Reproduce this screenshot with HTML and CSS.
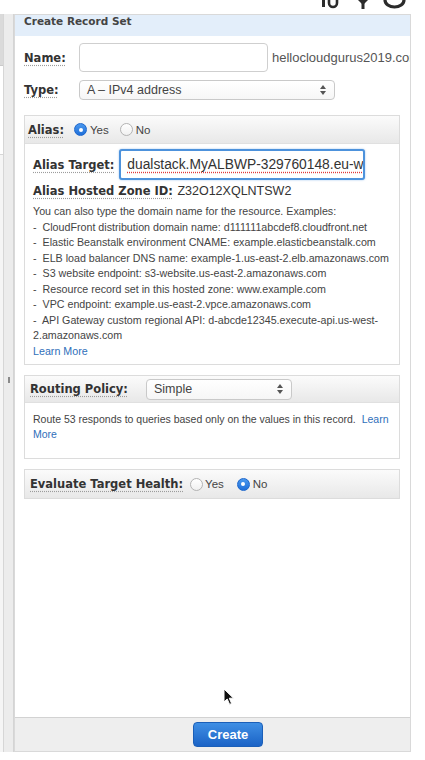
FILE: index.html
```html
<!DOCTYPE html>
<html>
<head>
<meta charset="utf-8">
<title>Create Record Set</title>
<link rel="stylesheet" href="styles.css">
</head>
<body>
<div class="screen">
  <div class="topbar">
    <svg class="top-icons" width="95" height="14" viewBox="0 0 95 14">
      <rect x="6" y="0" width="3" height="7" fill="#2b2b2b"/>
      <path d="M13 0 v3 a4 4 0 0 0 8 0 v-3" fill="none" stroke="#2b2b2b" stroke-width="2.6"/>
      <path d="M42 0 h10 l-5 5 z" fill="#2b2b2b"/>
      <rect x="45.5" y="0" width="3" height="9" fill="#2b2b2b"/>
      <path d="M69 0 a9.5 7 0 0 0 19 0" fill="none" stroke="#2b2b2b" stroke-width="3.2"/>
    </svg>
  </div>
  <div class="main">
    <div class="side">
      <div class="side-tabs">
        <div class="tab-dark"></div>
        <div class="tab-white"></div>
        <div class="tab-rest"></div>
      </div>
      <div class="side-rail"><span class="grip"></span></div>
    </div>
    <div class="panel">
      <div class="panel-head">Create Record Set</div>
      <div class="panel-body">
        <div class="row row-name">
          <span class="lbl lbl-col">Name:</span>
          <div class="textbox"></div>
          <span class="suffix">hellocloudgurus2019.com</span>
        </div>
        <div class="row row-type">
          <span class="lbl lbl-col">Type:</span>
          <div class="select select-type">
            <span class="select-text">A – IPv4 address</span>
            <svg class="arrows" width="6" height="10" viewBox="0 0 6 10"><path d="M3 0 L6 4 H0 Z M3 10 L0 6 H6 Z" fill="#555"/></svg>
          </div>
        </div>

        <div class="box box-alias">
          <div class="box-head head-alias">
            <span class="lbl">Alias:</span>
            <span class="radio on r-alias-yes"></span><span class="opt">Yes</span>
            <span class="radio r-alias-no"></span><span class="opt">No</span>
          </div>
          <div class="box-body body-alias">
            <div class="row row-target">
              <span class="lbl lbl-target">Alias Target:</span>
              <div class="textbox focus"><span class="spell">dualstack.MyALBWP-329760148.eu-west-1.elb.amazonaws.com</span></div>
            </div>
            <div class="zone"><span class="lbl">Alias Hosted Zone ID:</span> <span class="zone-val">Z32O12XQLNTSW2</span></div>
            <div class="help">
              <div>You can also type the domain name for the resource. Examples:</div>
              <div>-&nbsp; CloudFront distribution domain name: d111111abcdef8.cloudfront.net</div>
              <div>-&nbsp; Elastic Beanstalk environment CNAME: example.elasticbeanstalk.com</div>
              <div>-&nbsp; ELB load balancer DNS name: example-1.us-east-2.elb.amazonaws.com</div>
              <div>-&nbsp; S3 website endpoint: s3-website.us-east-2.amazonaws.com</div>
              <div>-&nbsp; Resource record set in this hosted zone: www.example.com</div>
              <div>-&nbsp; VPC endpoint: example.us-east-2.vpce.amazonaws.com</div>
              <div>-&nbsp; API Gateway custom regional API: d-abcde12345.execute-api.us-west-<br>2.amazonaws.com</div>
              <div><a class="link" href="#">Learn More</a></div>
            </div>
          </div>
        </div>

        <div class="box box-routing">
          <div class="box-head head-routing">
            <span class="lbl lbl-routing">Routing Policy:</span>
            <div class="select select-routing">
              <span class="select-text">Simple</span>
              <svg class="arrows" width="6" height="10" viewBox="0 0 6 10"><path d="M3 0 L6 4 H0 Z M3 10 L0 6 H6 Z" fill="#555"/></svg>
            </div>
          </div>
          <div class="box-body body-routing">
            Route 53 responds to queries based only on the values in this record.&nbsp; <a class="link" href="#">Learn<br>More</a>
          </div>
        </div>

        <div class="box box-eval">
          <div class="box-head head-eval">
            <span class="lbl">Evaluate Target Health:</span>
            <span class="radio r-eval-yes"></span><span class="opt">Yes</span>
            <span class="radio on r-eval-no"></span><span class="opt">No</span>
          </div>
        </div>
      </div>
      <div class="panel-foot">
        <button class="btn" type="button">Create</button>
      </div>
    </div>
  </div>
  <svg class="cursor" width="12" height="18" viewBox="0 0 12 18">
    <path d="M1 1 L1 14 L4.2 11 L6.6 16.4 L8.6 15.5 L6.3 10.2 L10.5 10.2 Z" fill="#111" stroke="#fff" stroke-width="1" stroke-linejoin="round"/>
  </svg>
</div>
</body>
</html>
```

FILE: styles.css
```css
* { box-sizing: border-box; }
html, body { margin: 0; padding: 0; background: #fff; }
body { font-family: "Liberation Sans", Arial, Helvetica, sans-serif; color: #444; }

.screen { position: relative; width: 425px; height: 760px; overflow: hidden; background: #fff; }

.topbar { height: 14px; display: flex; justify-content: flex-end; padding-right: 14px; }
.top-icons { display: block; }

.main { display: flex; height: 738px; }

.side { width: 14px; display: flex; flex-shrink: 0; }
.side-tabs { width: 4px; display: flex; flex-direction: column; border-right: 1px solid #d6d6d6; }
.tab-dark { height: 52px; background: #dadada; border-bottom: 1px solid #cacaca; }
.tab-white { height: 89px; background: #fff; border-bottom: 1px solid #d6d6d6; }
.tab-rest { flex: 1; background: #f5f5f5; }
.side-rail { flex: 1; background: #ececec; border-right: 1px solid #d4d4d4; display: flex; align-items: center; justify-content: center; padding-bottom: 6px; }
.grip { width: 2px; height: 6px; background: #8a8a8a; }

.panel { width: 397px; flex-shrink: 0; display: flex; flex-direction: column; border: 1px solid #d9d9d9; overflow: hidden; background: #fff; }
.panel-head { height: 21px; line-height: 21px; padding-left: 9px; background: #e3eefa; font: bold 10.5px "DejaVu Sans", Verdana, sans-serif; color: #444; }
.panel-body { flex: 1; padding: 7px 10px 0 9px; display: flex; flex-direction: column; }

.lbl { font: bold 11.5px "DejaVu Sans", Verdana, sans-serif; color: #333; text-decoration: underline dotted #9c9c9c; text-underline-offset: 3px; white-space: nowrap; }
.lbl-col { width: 55px; flex-shrink: 0; }

.row { display: flex; align-items: center; white-space: nowrap; flex-shrink: 0; }
.row-name { height: 29px; }
.row-type { height: 20px; margin-top: 8px; }

.textbox { flex-shrink: 0; width: 189px; height: 29px; border: 1px solid #cfcfcf; border-radius: 4px; background: #fff; }
.suffix { margin-left: 4px; font-size: 13px; color: #555; flex-shrink: 0; }

.select { flex-shrink: 0; display: flex; align-items: center; justify-content: space-between; border: 1px solid #c9c9c9; border-radius: 4px; background: linear-gradient(#ffffff, #f6f6f6); padding: 0 8px 0 7px; font-size: 12.5px; color: #444; }
.select-type { width: 256px; height: 20px; }
.select-routing { width: 146px; height: 21px; }
.arrows { display: block; }

.box { border: 1px solid #dcdcdc; flex-shrink: 0; background: #fff; }
.box-head { display: flex; align-items: center; background: linear-gradient(#fbfbfb, #e8e8e8); border-bottom: 1px solid #e0e0e0; white-space: nowrap; }
.box-alias { margin-top: 15px; }
.head-alias { height: 28px; padding-left: 3px; }
.box-routing { margin-top: 10px; }
.head-routing { height: 27px; padding-left: 5px; }
.box-eval { margin-top: 10px; }
.head-eval { height: 28px; padding-left: 5px; border-bottom: none; }

.radio { width: 13px; height: 13px; border-radius: 50%; border: 1px solid #b3b3b3; background: linear-gradient(#ffffff, #f0f0f0); flex-shrink: 0; display: flex; align-items: center; justify-content: center; }
.radio.on { border-color: #1c66cc; background: linear-gradient(#4a98ee, #1f6fd9); }
.radio.on::after { content: ""; width: 4px; height: 4px; border-radius: 50%; background: #fff; }
.opt { font-size: 11.5px; color: #444; }
.r-alias-yes { margin-left: 10px; margin-right: 3px; }
.r-alias-no { margin-left: 11px; margin-right: 3px; }
.r-eval-yes { margin-left: 7px; margin-right: 2px; }
.r-eval-no { margin-left: 13px; margin-right: 3px; }

.lbl-routing { width: 116px; flex-shrink: 0; }

.body-alias { padding: 5px 8px 5px 8px; }
.row-target { height: 31px; }
.lbl-target { margin-right: 5px; }
.textbox.focus { width: 246px; height: 31px; border: 2px solid #4d92dc; border-radius: 3px; box-shadow: 0 0 2px rgba(77,146,220,0.6); padding-left: 6px; display: flex; align-items: center; overflow: hidden; }
.spell { font-size: 13.8px; color: #333; text-decoration: underline dotted #e03a3a; text-underline-offset: 3px; white-space: nowrap; }

.zone { margin-top: 2px; line-height: 16px; white-space: nowrap; }
.zone-val { font-size: 12.5px; color: #333; }

.help { margin-top: 5px; font-size: 10.7px; line-height: 15.5px; color: #444; white-space: nowrap; }
.link { color: #2f6fba; text-decoration: none; }

.body-routing { padding: 9px 6px 16px 8px; font-size: 10.5px; line-height: 15px; color: #444; white-space: nowrap; }

.panel-foot { height: 34px; flex-shrink: 0; border-top: 1px solid #d2d2d2; background: #eeeeee; display: flex; align-items: center; padding-left: 178px; }
.btn { width: 70px; height: 25px; border: 1px solid #1b5fb8; border-radius: 4px; background: linear-gradient(#3f8fe4, #1b63c6); color: #fff; font: bold 13px "Liberation Sans", Arial, sans-serif; padding: 0; }

.cursor { position: absolute; left: 223px; top: 688px; display: block; }
```
